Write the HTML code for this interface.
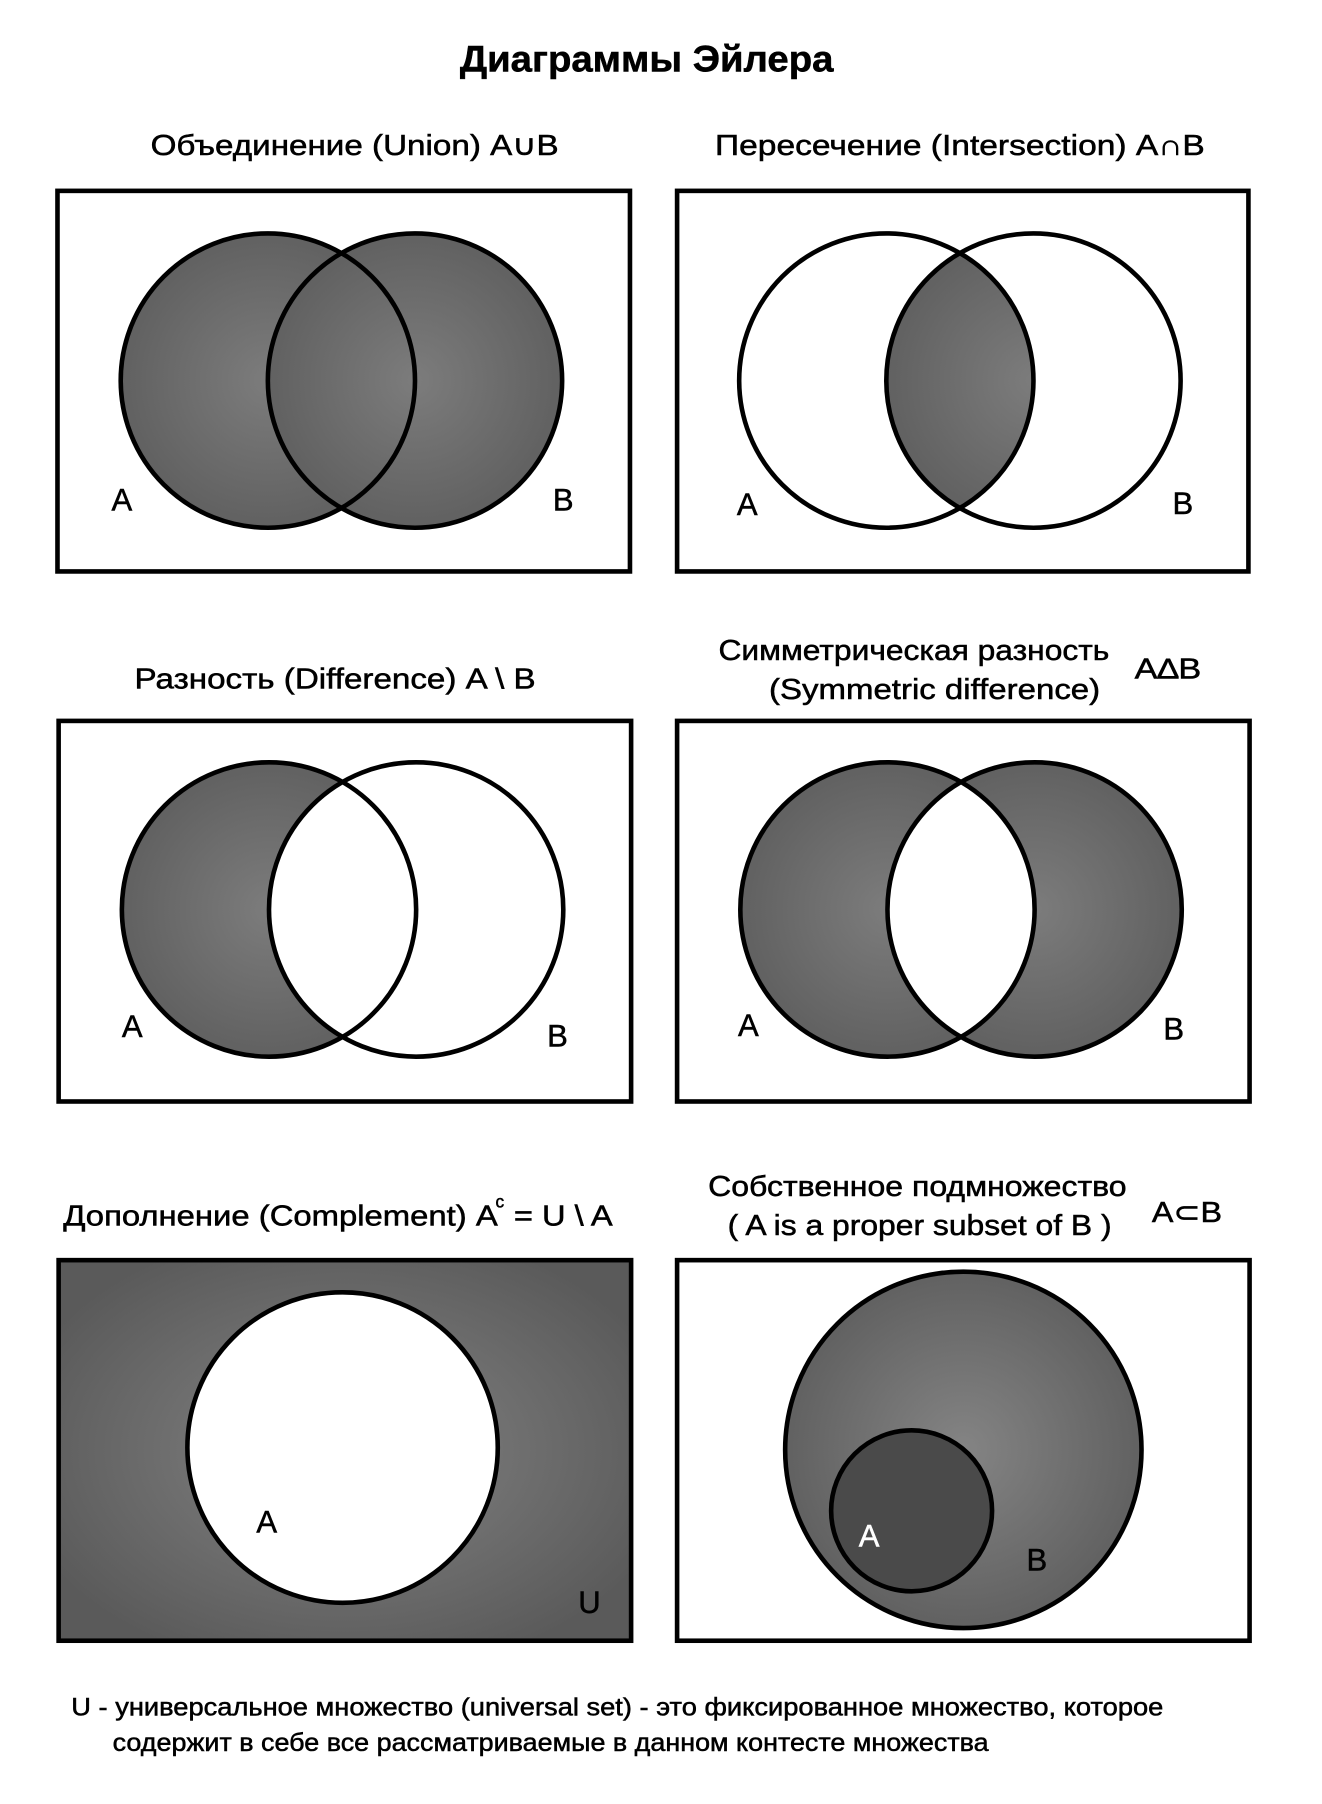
<!DOCTYPE html>
<html><head><meta charset="utf-8"><style>
html,body{margin:0;padding:0;background:#fff;}
svg{display:block;}
text{font-family:"Liberation Sans","DejaVu Sans",sans-serif;fill:#000;stroke:#000;stroke-width:0.45;}
</style></head><body>
<svg width="1322" height="1804" viewBox="0 0 1150 1569" preserveAspectRatio="none" xmlns="http://www.w3.org/2000/svg">
<defs>
<radialGradient id="g" cx="50%" cy="50%" r="55%">
<stop offset="0" stop-color="#7c7c7c"/><stop offset="1" stop-color="#5e5e5e"/>
</radialGradient>
<radialGradient id="g2" cx="50%" cy="50%" r="60%">
<stop offset="0" stop-color="#848484"/><stop offset="1" stop-color="#5a5a5a"/>
</radialGradient>
<clipPath id="cA3"><circle cx="234" cy="791" r="128"/></clipPath>
<clipPath id="cA2"><circle cx="771" cy="331" r="128"/></clipPath>
<clipPath id="cA4"><circle cx="772" cy="791" r="128"/></clipPath>
</defs>
<text x="400" y="62" font-size="32" font-weight="bold" textLength="325" lengthAdjust="spacingAndGlyphs">Диаграммы Эйлера</text>

<!-- Row 1 -->
<text x="131" y="135" font-size="25" textLength="355" lengthAdjust="spacingAndGlyphs">Объединение (Union)  A∪B</text>
<rect x="50" y="166" width="498" height="331" fill="#fff" stroke="#000" stroke-width="4"/>
<circle cx="233" cy="331" r="128" fill="url(#g)"/>
<circle cx="361" cy="331" r="128" fill="url(#g)"/>
<circle cx="233" cy="331" r="128" fill="none" stroke="#000" stroke-width="4"/>
<circle cx="361" cy="331" r="128" fill="none" stroke="#000" stroke-width="4"/>
<text x="97" y="444" font-size="27">A</text>
<text x="481" y="444" font-size="27">B</text>

<text x="622" y="135" font-size="25" textLength="426" lengthAdjust="spacingAndGlyphs">Пересечение (Intersection)  A∩B</text>
<rect x="589" y="166" width="497" height="331" fill="#fff" stroke="#000" stroke-width="4"/>
<circle cx="899" cy="331" r="128" fill="url(#g)" clip-path="url(#cA2)"/>
<circle cx="771" cy="331" r="128" fill="none" stroke="#000" stroke-width="4"/>
<circle cx="899" cy="331" r="128" fill="none" stroke="#000" stroke-width="4"/>
<text x="641" y="448" font-size="27">A</text>
<text x="1020" y="447" font-size="27">B</text>

<!-- Row 2 -->
<text x="117" y="599" font-size="25" textLength="349" lengthAdjust="spacingAndGlyphs">Разность (Difference)  A \ B</text>
<rect x="51" y="627" width="498" height="331" fill="#fff" stroke="#000" stroke-width="4"/>
<circle cx="234" cy="791" r="128" fill="url(#g)"/>
<circle cx="362" cy="791" r="128" fill="#fff" clip-path="url(#cA3)"/>
<circle cx="234" cy="791" r="128" fill="none" stroke="#000" stroke-width="4"/>
<circle cx="362" cy="791" r="128" fill="none" stroke="#000" stroke-width="4"/>
<text x="106" y="902" font-size="27">A</text>
<text x="476" y="910" font-size="27">B</text>

<text x="625" y="574" font-size="25" textLength="340" lengthAdjust="spacingAndGlyphs">Симметрическая разность</text>
<text x="669" y="608" font-size="25" textLength="288" lengthAdjust="spacingAndGlyphs">(Symmetric difference)</text>
<text x="987" y="590" font-size="25" textLength="58" lengthAdjust="spacingAndGlyphs">A∆B</text>
<rect x="589" y="627" width="498" height="331" fill="#fff" stroke="#000" stroke-width="4"/>
<circle cx="772" cy="791" r="128" fill="url(#g)"/>
<circle cx="900" cy="791" r="128" fill="url(#g)"/>
<circle cx="900" cy="791" r="128" fill="#fff" clip-path="url(#cA4)"/>
<circle cx="772" cy="791" r="128" fill="none" stroke="#000" stroke-width="4"/>
<circle cx="900" cy="791" r="128" fill="none" stroke="#000" stroke-width="4"/>
<text x="642" y="901" font-size="27">A</text>
<text x="1012" y="904" font-size="27">B</text>

<!-- Row 3 -->
<text x="55" y="1066" font-size="25" textLength="378" lengthAdjust="spacingAndGlyphs">Дополнение (Complement)  A</text>
<text x="431" y="1050" font-size="15">c</text>
<text x="447" y="1066" font-size="25" textLength="86" lengthAdjust="spacingAndGlyphs">= U \ A</text>
<rect x="51" y="1096" width="498" height="331" fill="url(#g2)" stroke="#000" stroke-width="4"/>
<circle cx="298" cy="1259" r="135" fill="#fff" stroke="#000" stroke-width="4"/>
<text x="223" y="1333" font-size="27">A</text>
<text x="503" y="1403" font-size="27">U</text>

<text x="616" y="1040" font-size="25" textLength="364" lengthAdjust="spacingAndGlyphs">Собственное подмножество</text>
<text x="633" y="1074" font-size="25" textLength="334" lengthAdjust="spacingAndGlyphs">( A is a proper subset of B )</text>
<text x="1002" y="1063" font-size="25" textLength="61" lengthAdjust="spacingAndGlyphs">A⊂B</text>
<rect x="589" y="1096" width="498" height="331" fill="#fff" stroke="#000" stroke-width="4"/>
<circle cx="838" cy="1261" r="155" fill="url(#g2)" stroke="#000" stroke-width="4"/>
<circle cx="793" cy="1314" r="70" fill="#4a4a4a" stroke="#000" stroke-width="4"/>
<text x="747" y="1345" font-size="27" style="fill:#fff;stroke:#fff">A</text>
<text x="893" y="1366" font-size="27">B</text>

<text x="62" y="1492" font-size="22" textLength="950" lengthAdjust="spacingAndGlyphs">U - универсальное множество (universal set) - это фиксированное множество, которое</text>
<text x="98" y="1523" font-size="22" textLength="762" lengthAdjust="spacingAndGlyphs">содержит в себе все рассматриваемые в данном контесте множества</text>
</svg>
</body></html>
